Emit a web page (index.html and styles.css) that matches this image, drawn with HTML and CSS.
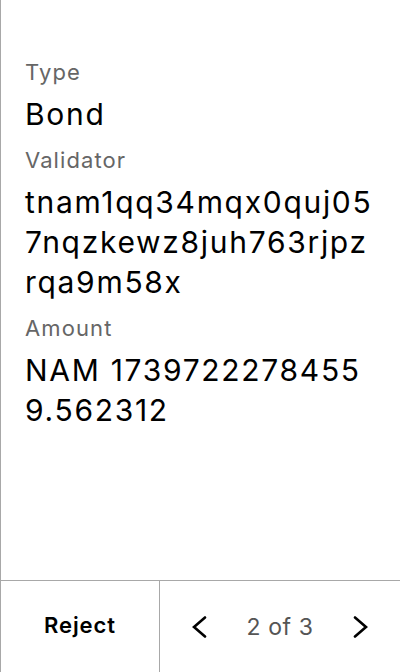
FILE: index.html
```html
<!DOCTYPE html>
<html>
<head>
<meta charset="utf-8">
<link rel="stylesheet" href="styles.css">
</head>
<body>
<div class="screen">
  <main class="details">
    <div class="field">
      <div class="label">Type</div>
      <div class="value">Bond</div>
    </div>
    <div class="field">
      <div class="label">Validator</div>
      <div class="value">tnam1qq34mqx0quj057nqzkewz8juh763rjpzrqa9m58x</div>
    </div>
    <div class="field">
      <div class="label">Amount</div>
      <div class="value">NAM 17397222784559.562312</div>
    </div>
  </main>
  <footer class="footer">
    <div class="reject">Reject</div>
    <div class="pager">
      <svg class="chev" width="16" height="22" viewBox="0 0 16 22"><polyline points="14,1.5 3,11 14,20.5" fill="none" stroke="#000" stroke-width="2.6" stroke-linecap="round" stroke-linejoin="miter"/></svg>
      <span class="count">2 of 3</span>
      <svg class="chev" width="16" height="22" viewBox="0 0 16 22"><polyline points="2,1.5 13,11 2,20.5" fill="none" stroke="#000" stroke-width="2.6" stroke-linecap="round" stroke-linejoin="miter"/></svg>
    </div>
  </footer>
</div>
</body>
</html>
```
FILE: styles.css
```css
* { box-sizing: border-box; }
html, body { margin: 0; padding: 0; background: #fff; }
body { font-family: Inter, "Noto Sans", sans-serif; color: #000; }
.screen {
  height: 672px;
  display: flex;
  flex-direction: column;
  border-left: 1px solid #a8a8a8;
}
.details {
  flex: 1;
  padding: 58px 25px 0 24px;
  display: flex;
  flex-direction: column;
  gap: 12px;
}
.field { display: flex; flex-direction: column; gap: 8px; }
.label { font-size: 22px; line-height: 28px; color: #666; letter-spacing: 1.1px; }
.value { font-size: 30px; line-height: 40px; letter-spacing: 1.7px; word-break: break-all; }
.footer {
  height: 92px;
  border-top: 1px solid #a8a8a8;
  display: flex;
}
.reject {
  width: 159px;
  border-right: 1px solid #a8a8a8;
  display: flex;
  align-items: center;
  justify-content: center;
  padding-bottom: 3px;
  font-size: 22px;
  font-weight: 600;
  letter-spacing: 0.9px;
}
.pager {
  flex: 1;
  display: flex;
  align-items: center;
  justify-content: space-between;
  padding: 0 31px 0 31px;
}
.count { font-size: 23px; color: #555; letter-spacing: 0.6px; }
.chev { display: block; }
```
